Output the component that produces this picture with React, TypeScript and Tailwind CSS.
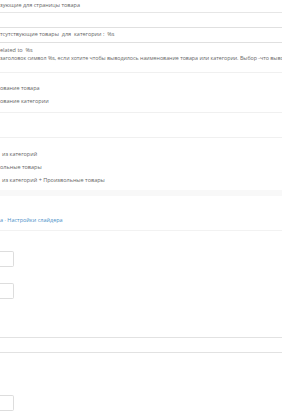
import React from "react";

const F = { fontFamily: '"Open Sans", "Liberation Sans", sans-serif' };

export default function App() {
  return (
    <div className="w-[282px] h-[420px] bg-white overflow-hidden text-[5.5px] text-[#666] leading-none" style={F}>
      <div className="flex flex-col">
        <div className="h-[12px] flex items-center">
          <span className="whitespace-nowrap">зующие для страницы товара</span>
        </div>
        <div className="h-[15px] border-t border-[#e6e6e6]" />
        <div className="h-[16px] border-t border-b border-[#e0e0e0] flex items-center">
          <span className="whitespace-nowrap">тсутствующие товары &nbsp;для &nbsp;категории : &nbsp;%s</span>
        </div>
        <div className="h-[8px] mt-[4px] flex items-center">
          <span className="whitespace-nowrap">elated to &nbsp;%s</span>
        </div>
        <div className="h-[8px] flex items-center">
          <span className="whitespace-nowrap text-[5.3px]">заголовок символ %s, если хотите чтобы выводилось наименование товара или категории. Выбор -что выводить</span>
        </div>
        <div className="h-[9px]" />
        <div className="border-t border-[#f0f0f0] h-[10px]" />
        <div className="h-[13px] flex items-center">
          <span className="whitespace-nowrap">ование товара</span>
        </div>
        <div className="h-[13px] flex items-center">
          <span className="whitespace-nowrap">ование категории</span>
        </div>
        <div className="h-[4px]" />
        <div className="h-[25px] border-t border-[#f0f0f0]" />
        <div className="border-t border-[#f0f0f0] h-[11px]" />
        <div className="h-[13px] flex items-center pl-[2px]">
          <span className="whitespace-nowrap">из категорий</span>
        </div>
        <div className="h-[13px] flex items-center">
          <span className="whitespace-nowrap">ольные товары</span>
        </div>
        <div className="h-[13px] flex items-center pl-[2px]">
          <span className="whitespace-nowrap">из категорий + Произвольные товары</span>
        </div>
        <div className="h-[3px]" />
        <div className="h-[6px] bg-[#f8f8f8]" />
        <div className="h-[19px]" />
        <div className="h-[11px] flex items-center">
          <span className="whitespace-nowrap text-[#4a90c8]">а · Настройки слайдера</span>
        </div>
        <div className="h-[5px] border-b border-[#f2f2f2]" />
        <div className="h-[20px]" />
        <div className="h-[16px] w-[14px] border border-[#ddd] rounded-r-[2px] border-l-0" />
        <div className="h-[16px]" />
        <div className="h-[16px] w-[14px] border border-[#ddd] rounded-r-[2px] border-l-0" />
        <div className="h-[38px]" />
        <div className="h-[15px] border-t border-[#e2e2e2]" />
        <div className="h-[43px] border-t border-[#e2e2e2]" />
        <div className="h-[16px] w-[14px] border border-[#ddd] rounded-r-[2px] border-l-0" />
      </div>
    </div>
  );
}
